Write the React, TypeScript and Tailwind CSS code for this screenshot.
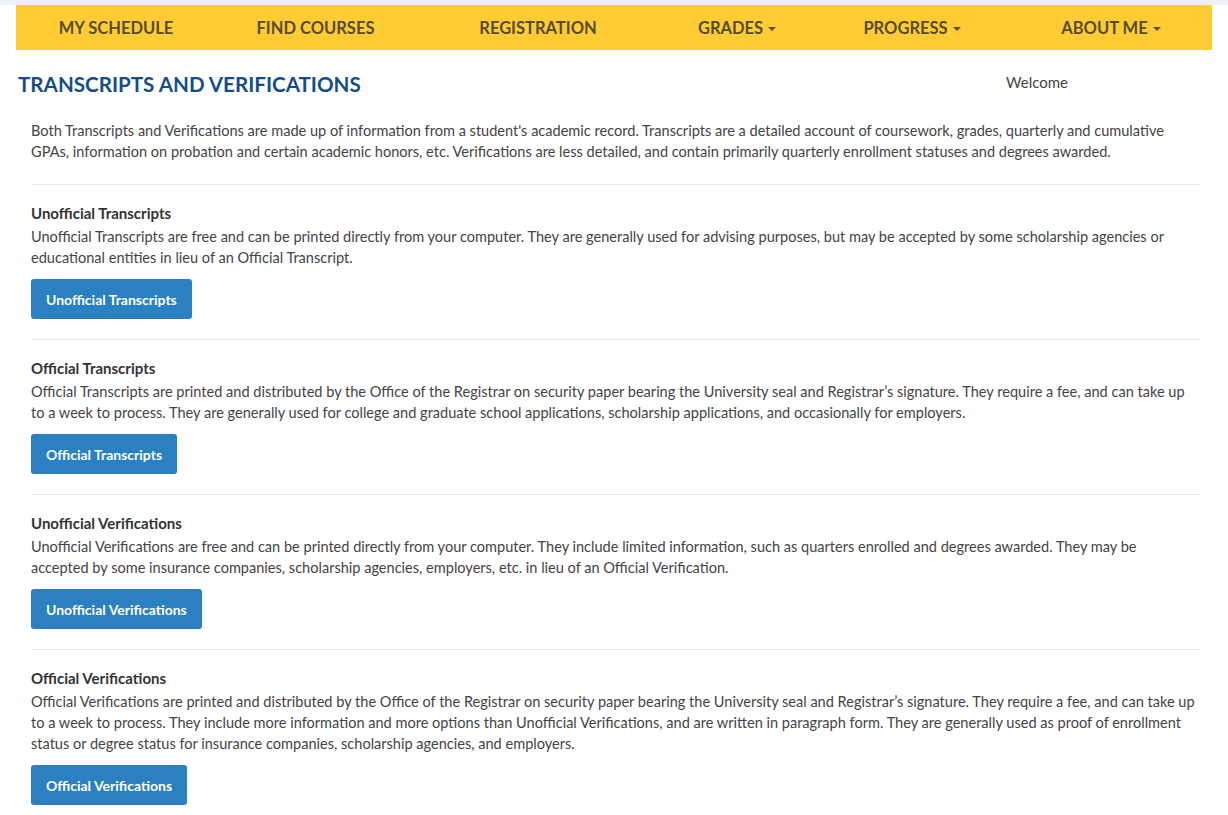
import React from "react";

type Section = {
  title: string;
  body: string;
  button: string;
};

const NAV: { label: string; w: string; caret?: boolean }[] = [
  { label: "MY SCHEDULE", w: "w-[200px]" },
  { label: "FIND COURSES", w: "w-[199px]" },
  { label: "REGISTRATION", w: "w-[246px]" },
  { label: "GRADES", w: "w-[152px]", caret: true },
  { label: "PROGRESS", w: "w-[198px]", caret: true },
  { label: "ABOUT ME", w: "w-[200px]", caret: true },
];

const SECTIONS: Section[] = [
  {
    title: "Unofficial Transcripts",
    body: "Unofficial Transcripts are free and can be printed directly from your computer. They are generally used for advising purposes, but may be accepted by some scholarship agencies or educational entities in lieu of an Official Transcript.",
    button: "Unofficial Transcripts",
  },
  {
    title: "Official Transcripts",
    body: "Official Transcripts are printed and distributed by the Office of the Registrar on security paper bearing the University seal and Registrar’s signature. They require a fee, and can take up to a week to process. They are generally used for college and graduate school applications, scholarship applications, and occasionally for employers.",
    button: "Official Transcripts",
  },
  {
    title: "Unofficial Verifications",
    body: "Unofficial Verifications are free and can be printed directly from your computer. They include limited information, such as quarters enrolled and degrees awarded. They may be accepted\u00a0by some insurance companies, scholarship agencies, employers, etc. in lieu of an Official Verification.",
    button: "Unofficial Verifications",
  },
  {
    title: "Official Verifications",
    body: "Official Verifications are printed and distributed by the Office of the Registrar on security paper bearing the University seal and Registrar’s signature. They require a fee, and can take up to a week to process. They include more information and more options than Unofficial Verifications, and are written in paragraph form. They are generally used as proof of enrollment status or degree status for insurance companies, scholarship agencies, and employers.",
    button: "Official Verifications",
  },
];

function Caret() {
  return <span className="ml-[5px] inline-block h-0 w-0 border-x-[4px] border-t-[4px] border-x-transparent border-t-[#5a4d30] align-middle" />;
}

export default function App() {
  return (
    <div className="min-h-[815px] bg-white font-['Lato','Liberation_Sans',sans-serif] text-[#444]">
      <div className="h-[5px] bg-[#eef1f7]" />

      {/* top nav */}
      <nav className="mx-[16px] flex h-[45px] items-center bg-[#ffcd33] pt-[1px]">
        {NAV.map((n) => (
          <div key={n.label} className={`${n.w} text-center text-[16.5px] font-bold text-[#574b30]`}>
            {n.label}
            {n.caret && <Caret />}
          </div>
        ))}
      </nav>

      {/* heading row */}
      <div className="flex items-start justify-between pt-[20px] pl-[18px] pr-[160px]">
        <h1 className="text-[20.6px] font-bold leading-[28px] text-[#154c8a]">TRANSCRIPTS AND VERIFICATIONS</h1>
        <div className="pt-[1px] text-[15px] leading-[22px] text-[#444]">Welcome</div>
      </div>

      <div className="ml-[31px] mr-[28px] pt-[22px]">
        <p className="mb-[22px] text-[14.55px] leading-[21px]">
          Both Transcripts and Verifications are made up of information from a student's academic record. Transcripts are a detailed account of coursework, grades, quarterly and cumulative GPAs, information on probation and certain academic honors, etc. Verifications are less detailed, and contain primarily quarterly enrollment statuses and degrees awarded.
        </p>

        {SECTIONS.map((s) => (
          <div key={s.title} className="border-t border-[#e9e9ec] pt-[18px] pb-[20px]">
            <h2 className="text-[15px] font-bold leading-[21px] text-[#333]">{s.title}</h2>
            <p className="mt-[2px] text-[14.55px] leading-[21px]">{s.body}</p>
            <button className="mt-[11px] h-[40px] rounded-[3px] bg-[#2a80c1] px-[15px] text-[14px] font-bold text-white">
              {s.button}
            </button>
          </div>
        ))}
      </div>
      <div className="border-t border-[#eef0f6]" />
    </div>
  );
}
